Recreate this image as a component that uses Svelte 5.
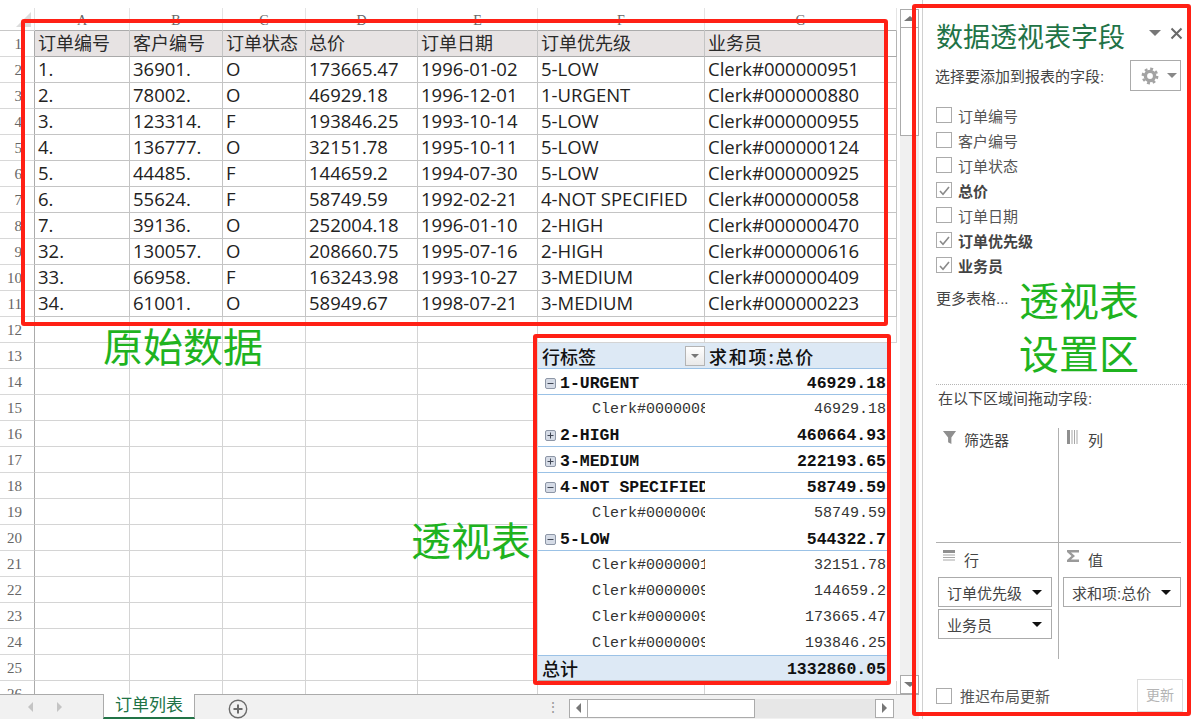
<script>
  const columns = ["A", "B", "C", "D", "E", "F", "G"];
  const header = ["订单编号", "客户编号", "订单状态", "总价", "订单日期", "订单优先级", "业务员"];
  const orders = [
    ["1.", "36901.", "O", "173665.47", "1996-01-02", "5-LOW", "Clerk#000000951"],
    ["2.", "78002.", "O", "46929.18", "1996-12-01", "1-URGENT", "Clerk#000000880"],
    ["3.", "123314.", "F", "193846.25", "1993-10-14", "5-LOW", "Clerk#000000955"],
    ["4.", "136777.", "O", "32151.78", "1995-10-11", "5-LOW", "Clerk#000000124"],
    ["5.", "44485.", "F", "144659.2", "1994-07-30", "5-LOW", "Clerk#000000925"],
    ["6.", "55624.", "F", "58749.59", "1992-02-21", "4-NOT SPECIFIED", "Clerk#000000058"],
    ["7.", "39136.", "O", "252004.18", "1996-01-10", "2-HIGH", "Clerk#000000470"],
    ["32.", "130057.", "O", "208660.75", "1995-07-16", "2-HIGH", "Clerk#000000616"],
    ["33.", "66958.", "F", "163243.98", "1993-10-27", "3-MEDIUM", "Clerk#000000409"],
    ["34.", "61001.", "O", "58949.67", "1998-07-21", "3-MEDIUM", "Clerk#000000223"]
  ];

  // pivot rows start at sheet row 14
  const pivot = [
    { kind: "open", label: "1-URGENT", value: "46929.18" },
    { kind: "leaf", label: "Clerk#000000880", value: "46929.18" },
    { kind: "closed", label: "2-HIGH", value: "460664.93" },
    { kind: "closed", label: "3-MEDIUM", value: "222193.65" },
    { kind: "open", label: "4-NOT SPECIFIED", value: "58749.59" },
    { kind: "leaf", label: "Clerk#000000058", value: "58749.59" },
    { kind: "open", label: "5-LOW", value: "544322.7" },
    { kind: "leaf", label: "Clerk#000000124", value: "32151.78" },
    { kind: "leaf", label: "Clerk#000000925", value: "144659.2" },
    { kind: "leaf", label: "Clerk#000000951", value: "173665.47" },
    { kind: "leaf", label: "Clerk#000000955", value: "193846.25" }
  ];

  const sheetRows = Array.from({ length: 25 }, (_, i) => i + 1);
  const fields = [
    { name: "订单编号", on: false },
    { name: "客户编号", on: false },
    { name: "订单状态", on: false },
    { name: "总价", on: true },
    { name: "订单日期", on: false },
    { name: "订单优先级", on: true },
    { name: "业务员", on: true }
  ];
</script>

<div class="app">
  <div class="left">
    <div class="sheet-area">
      <div class="sheet">
        <div class="corner"><span class="tri"></span></div>
        {#each columns as c}
          <div class="colhead">{c}</div>
        {/each}
        <div class="rowhead rowhead-first">1</div>
        {#each header as h, i}
          <div class="cell data title" class:last={i === 6}>{h}</div>
        {/each}
        {#each sheetRows.slice(1) as r}
          <div class="rowhead">{r}</div>
          {#if r <= 11}
            {#each orders[r - 2] as v}
              <div class="cell data">{v}</div>
            {/each}
          {:else}
            {#each [0, 1, 2, 3, 4] as _}
              <div class="cell"></div>
            {/each}
            {#if r === 12}
              <div class="cell"></div>
              <div class="cell"></div>
            {:else if r === 13}
              <div class="pv pv-head">
                <span class="pv-title">行标签</span>
                <span class="pv-btn"><i></i></span>
              </div>
              <div class="pv pv-head"><span class="pv-title sum">求和项:总价</span></div>
            {:else if r === 25}
              <div class="pv pv-total"><span class="pv-title">总计</span></div>
              <div class="pv pv-total right">1332860.05</div>
            {:else}
              {@const p = pivot[r - 14]}
              <div class="pv" class:group={p.kind !== "leaf"} class:leaf={p.kind === "leaf"}>
                {#if p.kind !== "leaf"}
                  <span class="exp">
                    <svg width="11" height="11" viewBox="0 0 11 11">
                      <rect x=".5" y=".5" width="10" height="10" rx="1.5" fill="#d5dbe6" stroke="#8d96a6" />
                      <path d="M2.5 5.5h6" stroke="#3f4654" />
                      {#if p.kind === "closed"}<path d="M5.5 2.5v6" stroke="#3f4654" />{/if}
                    </svg>
                  </span>
                {/if}
                <span class="pv-label">{p.label}</span>
              </div>
              <div class="pv right" class:group={p.kind !== "leaf"} class:leaf={p.kind === "leaf"}>{p.value}</div>
            {/if}
          {/if}
        {/each}
        <div class="rowhead">26</div>
        {#each columns as _}
          <div class="cell"></div>
        {/each}
      </div>

      <div class="vscroll">
        <div class="vbtn"><i class="up"></i></div>
        <div class="vthumb"></div>
        <div class="vtrack"></div>
        <div class="vbtn"><i class="down"></i></div>
      </div>
    </div>

    <div class="tabs">
      <div class="tab-nav"><i class="nav-l"></i><i class="nav-r"></i></div>
      <div class="tab">订单列表</div>
      <div class="add">
        <svg width="20" height="20" viewBox="0 0 20 20">
          <circle cx="10" cy="10" r="8.7" fill="none" stroke="#6b6b6b" stroke-width="1.4" />
          <path d="M10 5.5v9M5.5 10h9" stroke="#6b6b6b" stroke-width="2" />
        </svg>
      </div>
      <div class="grip">⋮</div>
      <div class="hscroll">
        <div class="hbtn"><i class="nav-l dark"></i></div>
        <div class="hthumb"></div>
        <div class="htrack"></div>
        <div class="hbtn"><i class="nav-r dark"></i></div>
      </div>
    </div>
  </div>

  <div class="panel">
    <div class="panel-top">
      <div class="panel-title">数据透视表字段</div>
      <i class="p-arrow"></i>
      <svg class="p-close" width="13" height="13" viewBox="0 0 13 13">
        <path d="M1.5 1.5l10 10M11.5 1.5l-10 10" stroke="#6a6a6a" stroke-width="2" />
      </svg>
    </div>
    <div class="choose">
      <span>选择要添加到报表的字段:</span>
      <div class="gear">
        <svg width="18" height="18" viewBox="0 0 18 18">
          <circle cx="9" cy="9" r="4.6" fill="none" stroke="#a3a3a3" stroke-width="3.4" />
          <circle cx="9" cy="9" r="7.2" fill="none" stroke="#a3a3a3" stroke-width="2.4" stroke-dasharray="2.9 2.75" />
        </svg>
        <i class="gear-arrow"></i>
      </div>
    </div>
    <div class="fields">
      {#each fields as f}
        <div class="field" class:on={f.on}>
          <span class="box">
            {#if f.on}
              <svg width="15" height="15" viewBox="0 0 15 15">
                <path d="M3 8l3 3.2L12 4" fill="none" stroke="#8a8a8a" stroke-width="1.6" />
              </svg>
            {/if}
          </span>
          <span>{f.name}</span>
        </div>
      {/each}
    </div>
    <div class="more">更多表格...</div>
    <div class="dots"></div>
    <div class="drag">在以下区域间拖动字段:</div>
    <div class="zones">
      <div class="zone z-tl">
        <div class="zone-head">
          <svg class="zi" width="15" height="15" viewBox="0 0 16 16"><path d="M1 1h14L10 8v7L6.500 13V8z" fill="#8f8f8f" /></svg>
          <span>筛选器</span>
        </div>
      </div>
      <div class="zone z-tr">
        <div class="zone-head">
          <svg class="zi" width="12" height="14" viewBox="0 0 12 14"><path d="M0 0h3v14H0z" fill="#8f8f8f" /><path d="M4.500 0h1v14h-1zM7 0h1v14H7zM9.500 0h1v14h-1z" fill="#a8a8a8" /></svg>
          <span>列</span>
        </div>
      </div>
      <div class="zone z-bl">
        <div class="zone-head">
          <svg class="zi" width="14" height="12" viewBox="0 0 14 12"><path d="M1 0h12v3H1z" fill="#8f8f8f" /><path d="M1 4.500h12v1H1zM1 7h12v1H1zM1 9.500h12v1H1z" fill="#a8a8a8" /></svg>
          <span>行</span>
        </div>
        <div class="pill"><span>订单优先级</span><i></i></div>
        <div class="pill"><span>业务员</span><i></i></div>
      </div>
      <div class="zone z-br">
        <div class="zone-head">
          <svg class="zi" width="13" height="12" viewBox="0 0 13 12"><path d="M0 0h12v2.500H4L8 6 4 9.500h8V12H0V10L4.500 6 0 2z" fill="#9a9a9a" /></svg>
          <span>值</span>
        </div>
        <div class="pill"><span>求和项:总价</span><i></i></div>
      </div>
    </div>
    <div class="panel-foot">
      <span class="box"></span>
      <span class="later">推迟布局更新</span>
      <span class="update">更新</span>
    </div>
  </div>

  <!-- annotations drawn on top of the screenshot -->
  <div class="frame f-data"></div>
  <div class="frame f-pivot"></div>
  <div class="frame f-panel"></div>
  <div class="note n-data">原始数据</div>
  <div class="note n-pivot">透视表</div>
  <div class="note n-panel">透视表<br />设置区</div>
</div>

<style>
  :global(body) {
    margin: 0;
    background: #fff;
  }

  .app {
    position: relative;
    display: flex;
    width: 1195px;
    height: 719px;
    overflow: hidden;
    font-family: "Liberation Sans", "Noto Sans CJK SC", sans-serif;
    color: #222;
  }

  .left {
    width: 919px;
    display: flex;
    flex-direction: column;
  }

  .sheet-area {
    height: 694px;
    display: flex;
    overflow: hidden;
  }

  .sheet {
    width: 897px;
    display: grid;
    grid-template-columns: 35px 95px 93px 83px 112px 120px 167px 192px;
    grid-template-rows: 23px repeat(26, 26px);
    padding-top: 8px;
    align-content: start;
    flex-shrink: 0;
  }

  .corner {
    position: relative;
    border-bottom: 1px solid #c8c8c8;
    border-right: 1px solid #e2e2e2;
  }

  .tri {
    position: absolute;
    right: 3px;
    bottom: 3px;
    border-style: solid;
    border-width: 0 0 15px 15px;
    border-color: transparent transparent #dcdcdc transparent;
  }

  .colhead {
    font-family: "Liberation Serif", serif;
    font-size: 14px;
    color: #666;
    text-align: center;
    line-height: 26px;
    border-right: 1px solid #e4e4e4;
    border-bottom: 1px solid #ababab;
  }

  .rowhead {
    font-family: "Liberation Serif", serif;
    font-size: 15px;
    color: #666;
    text-align: right;
    padding-right: 12px;
    line-height: 27px;
    border-right: 1px solid #ababab;
    border-bottom: 1px solid #d8d8d8;
    height: 26px;
    box-sizing: border-box;
  }

  .cell {
    border-right: 1px solid #d4d4d4;
    border-bottom: 1px solid #d4d4d4;
    box-sizing: border-box;
    overflow: hidden;
    white-space: nowrap;
  }

  .data {
    font-family: "Open Sans", "Noto Sans CJK SC", sans-serif;
    font-size: 18.5px;
    line-height: 23px;
    padding-left: 3px;
    color: #222;
    border-color: #c4c4c4;
  }

  .title {
    font-size: 18px;
    line-height: 25px;
    background: #e7e3e3;
    border-bottom-color: #a9a9a9;
    color: #2a2a2a;
  }

  .title.last {
    background: linear-gradient(to right, #e7e3e3 181px, #fff 181px);
    border-right-color: #b5b5b5;
  }

  .pv {
    box-sizing: border-box;
    overflow: hidden;
    white-space: nowrap;
    display: flex;
    align-items: center;
    font-family: "Liberation Mono", "Noto Sans CJK SC", monospace;
    font-size: 16.5px;
    line-height: 24px;
    color: #222;
    border-bottom: 1px solid transparent;
    width: 100%;
  }

  .pv + .pv {
    width: 183px;
  }

  .group {
    font-weight: bold;
    padding-left: 8px;
    padding-top: 4px;
    color: #111;
    border-bottom-color: #9bc2e6;
  }

  .leaf {
    padding-left: 54px;
    padding-top: 4px;
    font-size: 15px;
    color: #333;
  }

  .pv.right {
    justify-content: flex-end;
    padding: 4px 2px 0 0;
  }

  .pv-head,
  .pv-total {
    background: #dde9f5;
    padding-left: 4px;
    font-weight: bold;
    color: #111;
    border-bottom-color: #9bc2e6;
  }

  .pv-total {
    border-top: 1px solid #9bc2e6;
    border-bottom-color: #b0b0b0;
  }

  .pv-head {
    justify-content: space-between;
  }

  .pv-title {
    font-family: "Noto Sans CJK SC", sans-serif;
    font-size: 18px;
    font-weight: 500;
  }

  .sum {
    letter-spacing: 1.8px;
  }

  .pv-btn {
    width: 20px;
    height: 20px;
    box-sizing: border-box;
    border: 1px solid #b4b4b4;
    background: linear-gradient(#fff, #e9e9e9);
    display: flex;
    align-items: center;
    justify-content: center;
  }

  .pv-btn i {
    border-style: solid;
    border-width: 4px 4px 0;
    border-color: #777 transparent transparent;
  }

  .exp {
    width: 14px;
    height: 11px;
    display: flex;
    flex-shrink: 0;
    margin-left: -1px;
    margin-right: 1px;
  }

  .pv-label {
    flex-shrink: 0;
  }

  .vscroll {
    width: 19px;
    margin-left: 3px;
    padding-top: 9px;
    display: flex;
    flex-direction: column;
    background: #f0f0f0;
    background-clip: content-box;
    height: 685px;
  }

  .vbtn {
    height: 19px;
    flex-shrink: 0;
    background: #fff;
    box-sizing: border-box;
    border: 1px solid #ababab;
    display: flex;
    align-items: center;
    justify-content: center;
  }

  .vthumb {
    height: 108px;
    background: #fff;
    box-sizing: border-box;
    border: 1px solid #ababab;
    border-top: 0;
  }

  .vtrack {
    flex: 1;
  }

  .up {
    border-style: solid;
    border-width: 0 6px 5px;
    border-color: transparent transparent #777;
  }

  .down {
    border-style: solid;
    border-width: 5px 6px 0;
    border-color: #777 transparent transparent;
  }

  .tabs {
    height: 25px;
    box-sizing: border-box;
    border-top: 1px solid #ababab;
    background: #f1f1f1;
    display: flex;
    align-items: center;
  }

  .tab-nav {
    width: 103px;
    box-sizing: border-box;
    display: flex;
    gap: 24px;
    padding-left: 28px;
  }

  .nav-l {
    border-style: solid;
    border-width: 5px 5px 5px 0;
    border-color: transparent #c4c4c4 transparent transparent;
  }

  .nav-r {
    border-style: solid;
    border-width: 5px 0 5px 5px;
    border-color: transparent transparent transparent #c4c4c4;
  }

  .nav-l.dark {
    border-right-color: #777;
  }

  .nav-r.dark {
    border-left-color: #777;
  }

  .tab {
    width: 92px;
    height: 25px;
    margin-top: -1px;
    box-sizing: border-box;
    background: #fff;
    color: #217346;
    font-size: 17px;
    line-height: 23px;
    text-align: center;
    border-left: 1px solid #ababab;
    border-right: 1px solid #ababab;
    border-bottom: 2px solid #217346;
  }

  .add {
    width: 20px;
    height: 20px;
    margin-left: 33px;
    margin-top: 3px;
  }

  .grip {
    margin-left: 298px;
    width: 23px;
    color: #999;
    font-size: 14px;
  }

  .hscroll {
    width: 325px;
    height: 19px;
    margin-top: 2px;
    display: flex;
    background: #e7e7e7;
  }

  .hbtn {
    width: 19px;
    flex-shrink: 0;
    box-sizing: border-box;
    background: #fff;
    border: 1px solid #ababab;
    display: flex;
    align-items: center;
    justify-content: center;
  }

  .hthumb {
    width: 167px;
    background: #fff;
    box-sizing: border-box;
    border: 1px solid #ababab;
    border-left: 0;
  }

  .htrack {
    flex: 1;
  }

  .panel {
    position: relative;
    flex: 1;
    margin-left: 3px;
    box-sizing: border-box;
    border-left: 1px solid #d0d0d0;
    padding-left: 13px;
    display: flex;
    flex-direction: column;
    color: #444;
  }

  .panel-top {
    display: flex;
    align-items: center;
    height: 36px;
    margin-top: 20px;
  }

  .panel-title {
    font-size: 27px;
    line-height: 36px;
    color: #217346;
    width: 213px;
    flex-shrink: 0;
  }

  .p-arrow {
    border-style: solid;
    border-width: 6px 6px 0;
    border-color: #777 transparent transparent;
    margin-bottom: 10px;
  }

  .p-close {
    margin-left: 9px;
    margin-bottom: 10px;
  }

  .choose {
    display: flex;
    align-items: center;
    height: 31px;
    margin-top: 4px;
    margin-left: -1px;
    font-size: 15px;
  }

  .choose span {
    width: 195px;
    flex-shrink: 0;
  }

  .gear {
    width: 51px;
    height: 31px;
    box-sizing: border-box;
    border: 1px solid #ababab;
    display: flex;
    align-items: center;
    padding-left: 10px;
    gap: 8px;
  }

  .gear-arrow {
    border-style: solid;
    border-width: 5px 5px 0;
    border-color: #888 transparent transparent;
  }

  .fields {
    margin-top: 12px;
    display: flex;
    flex-direction: column;
    gap: 1px;
  }

  .field {
    display: flex;
    align-items: center;
    height: 24px;
    font-size: 15px;
    gap: 6px;
    color: #555;
  }

  .field.on {
    font-weight: bold;
    color: #444;
  }

  .box {
    width: 16px;
    height: 16px;
    box-sizing: border-box;
    border: 1px solid #ababab;
    display: block;
    flex-shrink: 0;
    background: #fff;
  }

  .box svg {
    display: block;
  }

  .more {
    font-size: 15px;
    margin-top: 12px;
    line-height: 20px;
  }

  .dots {
    margin-top: 75px;
    margin-right: 8px;
    border-top: 1px dotted #b5b5b5;
  }

  .drag {
    margin-top: 4px;
    margin-left: 2px;
    font-size: 15px;
    line-height: 20px;
  }

  .zones {
    display: grid;
    grid-template-columns: 123px 122px;
    grid-template-rows: 115px 116px;
    margin-top: 19px;
    width: 245px;
    font-size: 15px;
  }

  .z-tl,
  .z-bl {
    border-right: 1px solid #b0b0b0;
  }

  .z-tl,
  .z-tr {
    border-bottom: 1px solid #b0b0b0;
  }

  .zone {
    padding-left: 2px;
  }

  .z-tr,
  .z-br {
    padding-left: 4px;
  }

  .zone-head {
    display: flex;
    align-items: center;
    height: 22px;
    margin-top: 0;
    position: relative;
    padding-left: 26px;
  }

  .z-tr .zone-head,
  .z-br .zone-head {
    padding-left: 25px;
  }

  .z-bl .zone-head,
  .z-br .zone-head {
    margin-top: 5px;
    margin-bottom: 7px;
  }

  .zi {
    position: absolute;
    left: 4px;
    top: 2px;
  }

  .pill {
    width: 114px;
    height: 30px;
    box-sizing: border-box;
    border: 1px solid #ababab;
    margin-bottom: 2px;
    font-size: 15px;
    display: flex;
    align-items: center;
    justify-content: space-between;
    padding: 0 9px 0 8px;
    background: #fff;
  }

  .z-br .pill {
    width: 118px;
  }

  .pill i {
    border-style: solid;
    border-width: 5px 5px 0;
    border-color: #111 transparent transparent;
  }

  .panel-foot {
    display: flex;
    align-items: center;
    margin-top: 20px;
    height: 33px;
  }

  .later {
    font-size: 15px;
    margin-left: 8px;
    width: 177px;
    flex-shrink: 0;
    color: #555;
  }

  .update {
    width: 46px;
    height: 33px;
    box-sizing: border-box;
    border: 1px solid #dcdcdc;
    color: #b4b4b4;
    font-size: 14px;
    line-height: 31px;
    text-align: center;
  }

  .frame {
    position: absolute;
    box-sizing: border-box;
    border: 4px solid #ff2015;
    border-radius: 3px;
    pointer-events: none;
  }

  .f-data {
    left: 21px;
    top: 19px;
    width: 867px;
    height: 307px;
  }

  .f-pivot {
    left: 533px;
    top: 334px;
    width: 358px;
    height: 351px;
  }

  .f-panel {
    left: 912px;
    top: 4px;
    width: 279px;
    height: 712px;
  }

  .note {
    position: absolute;
    font-size: 40px;
    line-height: 53px;
    color: #1fb31f;
    white-space: nowrap;
  }

  .n-data {
    left: 103px;
    top: 322px;
  }

  .n-pivot {
    left: 411px;
    top: 516px;
  }

  .n-panel {
    left: 1019px;
    top: 276px;
  }
</style>
